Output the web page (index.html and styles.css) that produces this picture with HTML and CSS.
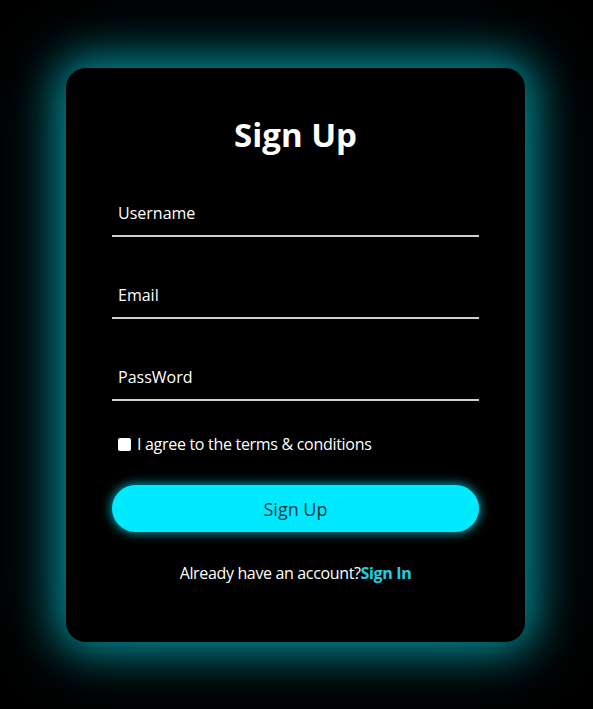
FILE: index.html
```html
<!DOCTYPE html>
<html lang="en">
<head>
<meta charset="utf-8">
<title>Sign Up</title>
<link rel="stylesheet" href="styles.css">
</head>
<body>
<main class="card">
  <h1 class="title">Sign Up</h1>
  <form class="form">
    <label class="field"><input type="text" placeholder="Username"></label>
    <label class="field"><input type="email" placeholder="Email"></label>
    <label class="field"><input type="password" placeholder="PassWord"></label>
    <label class="terms"><span class="box"></span>I agree to the terms &amp; conditions</label>
    <button type="button" class="btn">Sign Up</button>
    <p class="switch">Already have an account?<a href="#">Sign In</a></p>
  </form>
</main>
</body>
</html>
```
FILE: styles.css
```css
* { box-sizing: border-box; }
html, body { margin: 0; background: #000; }
body {
  min-height: 709px;
  display: flex;
  justify-content: center;
  align-items: flex-start;
  padding: 68px 2px 0 0;
  font-family: "Open Sans", "Noto Sans", sans-serif;
  color: #fff;
}
.card {
  width: 459px;
  height: 574px;
  background: #000;
  border-radius: 20px;
  box-shadow: 0 0 40px 8px rgba(0, 200, 215, 0.6), 0 0 70px 12px rgba(0, 160, 175, 0.35);
  padding: 40px 46px 0;
}
.title {
  margin: 0;
  text-align: center;
  font-size: 33px;
  font-weight: 700;
  line-height: 54px;
}
.form { display: flex; flex-direction: column; margin-top: 29px; }
.field { display: block; margin-bottom: 36px; }
.field input {
  width: 100%;
  height: 46px;
  background: transparent;
  border: none;
  border-bottom: 2px solid #cfcfcf;
  outline: none;
  color: #fff;
  font-family: inherit;
  font-size: 16px;
  padding: 0 6px;
}
.field input::placeholder { color: #fff; opacity: 1; }
.terms {
  display: flex;
  align-items: center;
  margin-top: -4px;
  padding-left: 6px;
  font-size: 16px;
  letter-spacing: -0.3px;
}
.box {
  width: 13px;
  height: 13px;
  background: #fff;
  border-radius: 2px;
  margin-right: 6px;
}
.btn {
  margin-top: 30px;
  height: 47px;
  border: none;
  border-radius: 24px;
  background: #00eaff;
  box-shadow: 0 0 10px 2px rgba(0, 230, 255, 0.6);
  color: #0c3440;
  font-family: inherit;
  font-size: 18px;
}
.switch {
  margin: 30px 0 0;
  text-align: center;
  font-size: 16px;
  letter-spacing: -0.35px;
}
.switch a { color: #17d3e6; font-weight: 700; text-decoration: none; }
```
